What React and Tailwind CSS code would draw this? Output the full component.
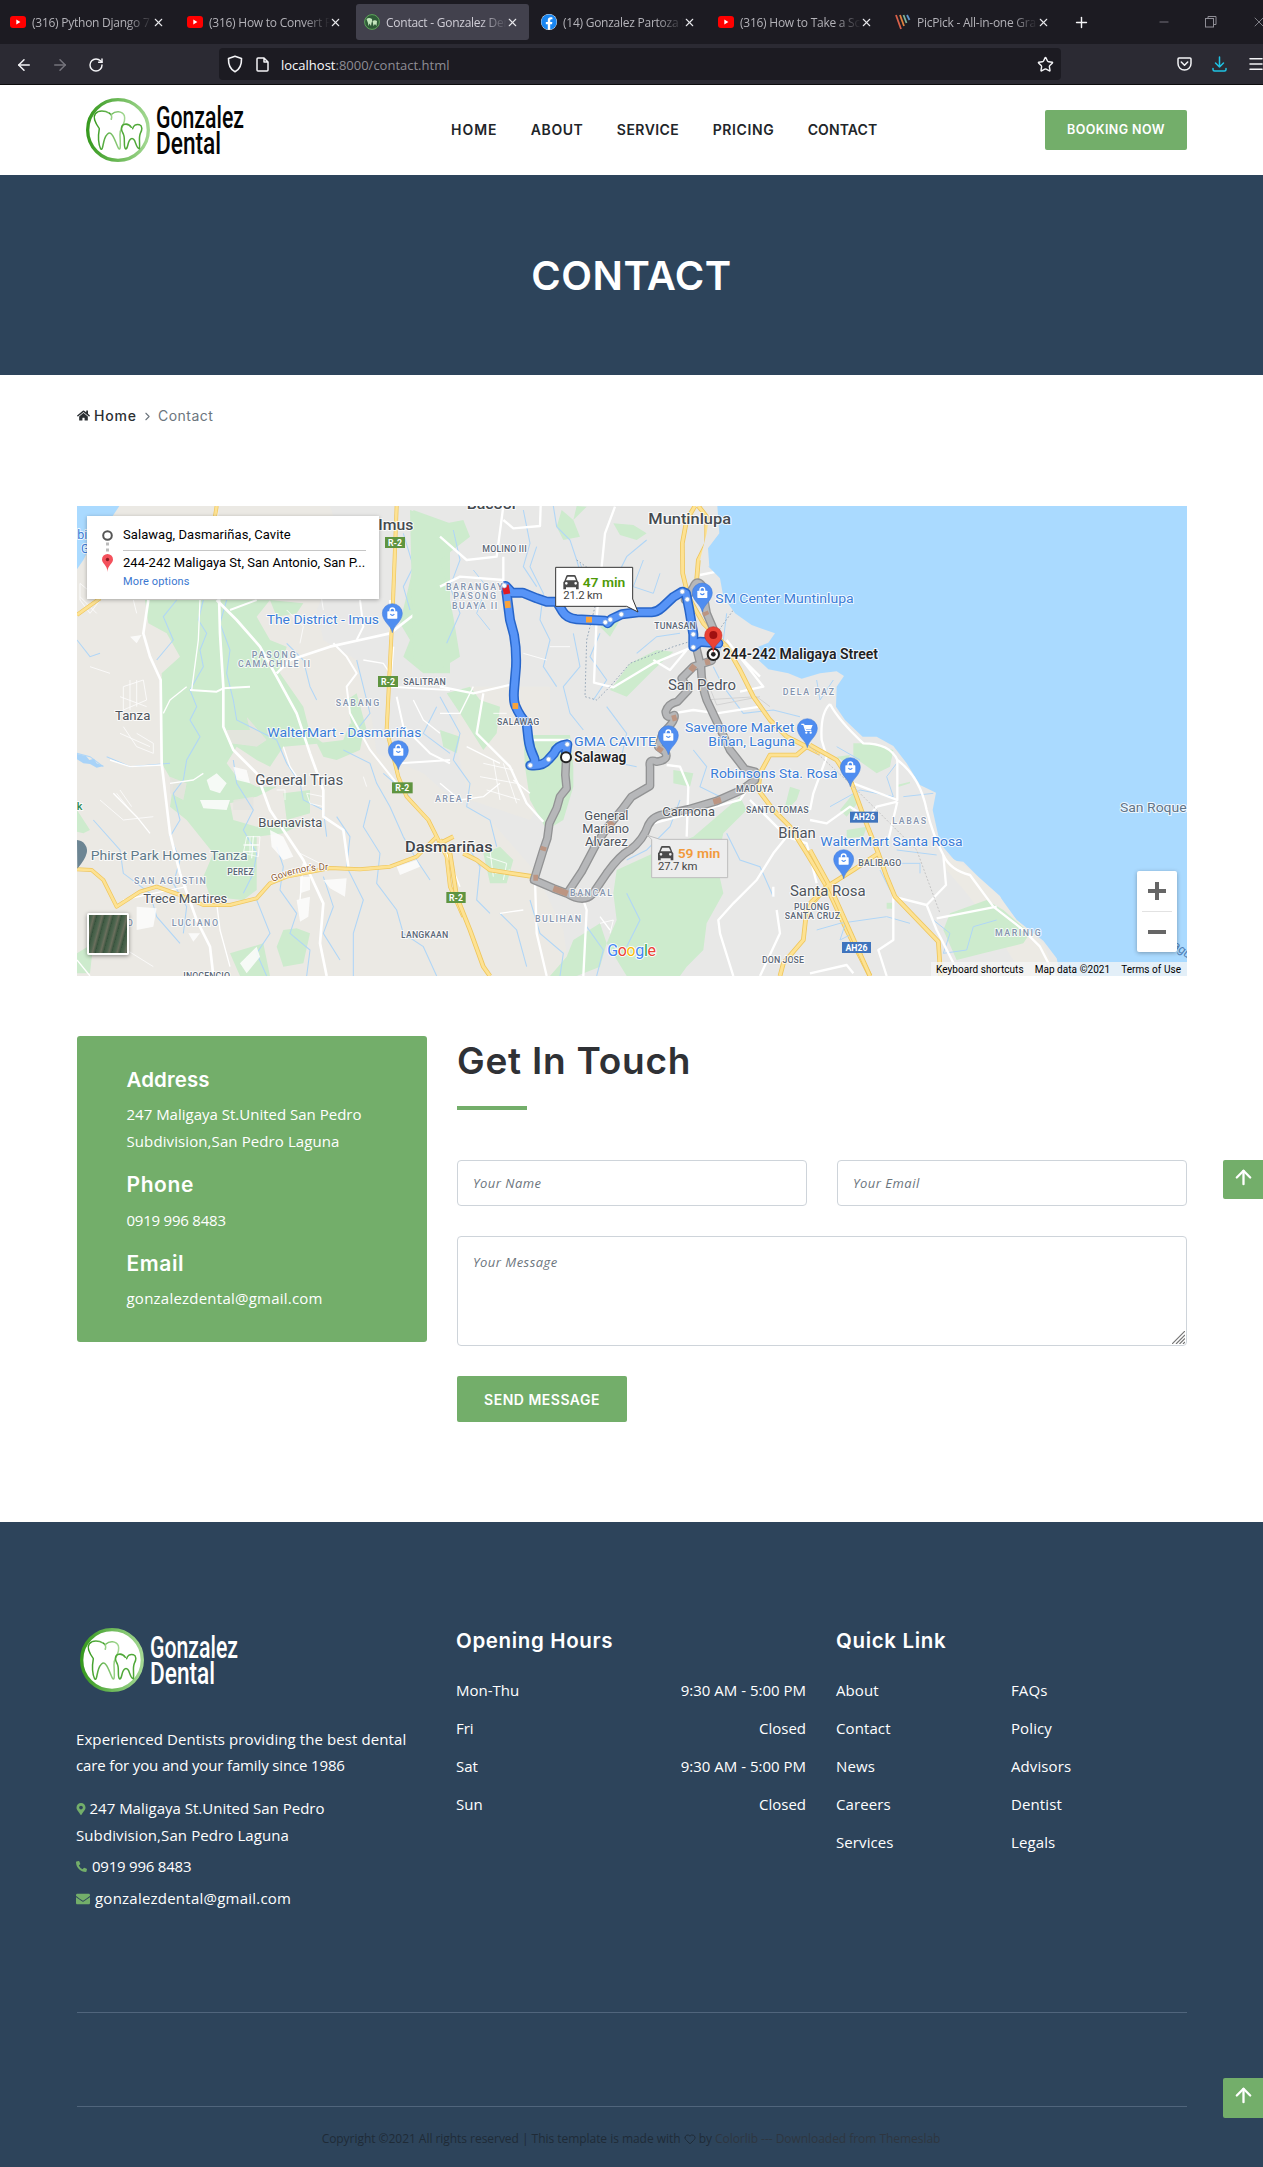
import React from "react";
import { X, Plus, ArrowLeft, ArrowRight, ArrowUp, RotateCw, Star, Heart, Menu, Minus, ChevronRight } from "lucide-react";
import { FaHome, FaMapMarkerAlt, FaPhoneAlt, FaEnvelope, FaFacebook } from "react-icons/fa";

const HEAD = "font-['Inter',sans-serif]";

/* ---------- Logo ---------- */
function Teeth({ size, id, fill }) {
  return (
    <svg width={size} height={size} viewBox="0 0 192 192" fill="none">
      <defs>
        <linearGradient id={id} x1="0" y1="0" x2="1" y2="0">
          <stop offset="0" stopColor="#379a1f" />
          <stop offset="1" stopColor="#a3d892" />
        </linearGradient>
      </defs>
      <circle cx="96" cy="96" r="91" fill={fill} stroke={`url(#${id})`} strokeWidth="10" />
      <g stroke={`url(#${id})`} strokeWidth="4.5" strokeLinecap="round" strokeLinejoin="round">
        <path d="M71 46C56 37 38 36 28 47C20 57 29 76 40 92C36 115 38 140 44 153C51 158 50 138 56 122C61 109 68 103 74 106C84 112 90 138 98 152C105 157 103 138 102 110C102 100 104 94 108 88C113 78 119 67 115 53C108 38 88 38 77 49" />
        <path d="M71 46Q80 52 76 64" />
        <path d="M136 88C130 79 120 77 112 80C105 85 105 96 112 108C119 122 111 147 119 153C126 152 124 138 130 128C134 119 142 119 146 128C150 138 154 153 160 152C163 138 157 120 163 106C169 96 170 84 160 80C150 77 142 83 140 92" stroke="#4fa838" />
      </g>
    </svg>
  );
}

function Logo({ id, color, circle }) {
  return (
    <div className="flex items-center gap-[5px]">
      <Teeth size={64} id={id} fill={circle} />
      <svg width="92" height="64" viewBox="0 0 92 64" fill={color} fontFamily="Roboto, sans-serif" fontWeight="500" fontSize="31.5">
        <text x="1" y="30" textLength="88" lengthAdjust="spacingAndGlyphs">Gonzalez</text>
        <text x="1" y="56" textLength="65" lengthAdjust="spacingAndGlyphs">Dental</text>
      </svg>
    </div>
  );
}

/* ---------- Browser chrome ---------- */
const YouTube = () => (
  <svg width="16" height="16" viewBox="0 0 16 16"><rect y="2" width="16" height="12" rx="3" fill="#f00" /><path d="M6.3 5.6L10.4 8L6.3 10.4Z" fill="#fff" /></svg>
);
const ToothIcon = () => (
  <svg width="16" height="16" viewBox="0 0 16 16"><circle cx="8" cy="8" r="7.4" fill="#2f5b38" stroke="#5da55a" /><path d="M2.5 5Q5 3 8 5Q8.500 7 7.500 9L7 12L5.500 9.500L4.500 12L4 9ZM8.500 7Q11 5.500 13 7L12.500 12L11 10L9.500 12Z" fill="#c4e6bd" /></svg>
);
const PicPick = () => (
  <svg width="16" height="16" viewBox="0 0 16 16" strokeWidth="1.8" fill="none"><path d="M1 1L6 15" stroke="#d8604a" /><path d="M5 1L9 12" stroke="#e0813f" /><path d="M8.500 1L11.500 9" stroke="#7db39a" /><path d="M12 1L14.500 6" stroke="#5d93c8" /></svg>
);
const TABS = [
  { icon: <YouTube />, title: "(316) Python Django 7" },
  { icon: <YouTube />, title: "(316) How to Convert P" },
  { icon: <ToothIcon />, title: "Contact - Gonzalez Den", active: true },
  { icon: <FaFacebook size={16} color="#1a86f0" className="rounded-full bg-white" />, title: "(14) Gonzalez Partoza D" },
  { icon: <YouTube />, title: "(316) How to Take a Scr" },
  { icon: <PicPick />, title: "PicPick - All-in-one Gra" },
];

function Browser() {
  return (
    <div className="font-['Open_Sans',sans-serif]">
      <div className="flex h-11 items-center overflow-hidden bg-[#1c1b22] pl-[2px]">
        <div className="flex gap-1">
          {TABS.map((t, i) => (
            <div key={i} className={`flex h-9 w-[173px] items-center rounded-[3px] pr-3 pl-2 ${t.active ? "bg-[#42414d]" : ""}`}>
              <span className="shrink-0">{t.icon}</span>
              <span className={`ml-[6px] w-[121px] shrink-0 overflow-hidden pt-px text-[12px] tracking-[-0.25px] whitespace-nowrap [mask-image:linear-gradient(to_right,#000_78%,transparent)] ${t.active ? "text-[#cfcdd6]" : "text-[#b3b2b8]"}`}>{t.title}</span>
              <X size={13} strokeWidth={2} color="#e8e8ec" className="-ml-px shrink-0" />
            </div>
          ))}
        </div>
        <Plus size={17} strokeWidth={2} color="#f5f5f8" className="ml-[13px] shrink-0" />
        <div className="ml-[67px] flex shrink-0 items-center gap-[34px] text-[#8f8e96]">
          <Minus size={14} strokeWidth={1.3} />
          <svg width="12" height="12" viewBox="0 0 12 12" fill="none" stroke="currentColor"><rect x=".5" y="2.500" width="8" height="8.500" /><path d="M3 2.500V.5H11V8.500H8.500" /></svg>
          <X size={16} strokeWidth={1.3} />
        </div>
      </div>
      <div className="flex h-[41px] items-center overflow-hidden border-b border-[#0c0c0d] bg-[#2b2a33] pl-[15px]">
        <ArrowLeft size={18} strokeWidth={2} color="#f5f5f8" className="mt-px shrink-0" />
        <ArrowRight size={18} strokeWidth={2} color="#75747c" className="mt-px ml-[18px] shrink-0" />
        <RotateCw size={16} strokeWidth={2.2} color="#f5f5f8" className="mt-px ml-[19px] shrink-0" />
        <div className="ml-[115px] flex h-8 w-[842px] shrink-0 items-center rounded bg-[#1c1b22] pr-[7px] pl-[8px]">
          <svg width="16" height="18" viewBox="0 0 16 18" fill="none" stroke="#f3f3f6" strokeWidth="1.6" strokeLinejoin="round"><path d="M8 1.200L14.500 3.500C14.700 9 13.500 14 8 16.800C2.500 14 1.300 9 1.500 3.500Z" /></svg>
          <svg width="13" height="15" viewBox="0 0 13 15" fill="none" stroke="#f3f3f6" strokeWidth="1.5" strokeLinejoin="round" className="ml-[13px]"><path d="M2 1H8L12 5V13Q12 14 11 14H2Q1 14 1 13V2Q1 1 2 1ZM8 1V5H12" /></svg>
          <span className="ml-[12px] pt-[2px] text-[13px] leading-5 text-[#8e8d95]"><span className="text-[#fbfbfe]">localhost</span>:8000/contact.html</span>
          <Star size={17} strokeWidth={2} color="#f3f3f6" className="ml-auto" />
        </div>
        <svg width="15" height="14" viewBox="0 0 15 14" fill="none" stroke="#f3f3f6" strokeWidth="1.5" strokeLinecap="round" strokeLinejoin="round" className="ml-[116px] shrink-0"><path d="M2 1H13Q14 1 14 2V6.500C14 10.500 11 13 7.500 13S1 10.500 1 6.500V2Q1 1 2 1ZM4.300 5L7.500 8.200L10.700 5" /></svg>
        <svg width="15" height="16" viewBox="0 0 15 16" fill="none" stroke="#1fc3e4" strokeWidth="1.500" strokeLinecap="round" strokeLinejoin="round" className="ml-[20px] shrink-0"><path d="M7.500 1V11M3.500 7L7.500 11L11.500 7M1 12.500V13.500Q1 15 2.500 15H12.500Q14 15 14 13.500V12.500" /></svg>
        <Menu size={18} strokeWidth={2} color="#f3f3f6" className="ml-[20px] shrink-0" />
      </div>
    </div>
  );
}

/* ---------- Header ---------- */
const NAV = [
  ["HOME", "tracking-[0.97px]"],
  ["ABOUT", "tracking-[0.57px]"],
  ["SERVICE", "tracking-[0.45px]"],
  ["PRICING", "tracking-[0.61px]"],
  ["CONTACT", "tracking-[0.1px]"],
];
function Header() {
  return (
    <header className="flex h-[90px] items-center bg-white px-[76px]">
      <div className="ml-[10px]"><Logo id="ringA" color="#060606" circle="#fff" /></div>
      <nav className={`ml-[204px] flex gap-[33.400px] text-[14px] font-semibold text-[#212529] ${HEAD}`}>
        {NAV.map(([n, c]) => <a key={n} className={`-mt-px ${c}`}>{n}</a>)}
      </nav>
      <a className={`ml-auto flex h-10 w-[142px] items-center justify-center rounded-[2px] bg-[#73ae6a] pt-px text-[12.500px] font-semibold tracking-[0.4px] text-white ${HEAD}`}>BOOKING NOW</a>
    </header>
  );
}

/* ---------- Map ---------- */
const BLUE = "#3b7dd8", SUB = "#8494ae", TOWN = "#4e545c", AREA = "#5c6878";
const LABELS = [
  // panel, x, baseline, width, text, size, colour, weight
  ["A", 925, 90, 105, "Imus", 42, "#444a50", 500],
  ["A", 590, 372, 337, "The District - Imus", 39, BLUE, 400],
  ["A", 545, 474, 132, "PASONG", 26, SUB, 500],
  ["A", 504, 502, 216, "CAMACHILE II", 26, SUB, 500],
  ["A", 1000, 556, 127, "SALITRAN", 26, AREA, 500],
  ["A", 797, 618, 131, "SABANG", 26, SUB, 500],
  ["A", 135, 660, 106, "Tanza", 38, TOWN, 400],
  ["A", 592, 711, 462, "WalterMart - Dasmariñas", 39, BLUE, 400],
  ["A", 556, 855, 264, "General Trias", 40, TOWN, 400],
  ["A", 565, 981, 192, "Buenavista", 36, TOWN, 400],
  ["A", 1005, 1057, 263, "Dasmariñas", 44, "#3f444a", 500],
  ["A", 62, 1080, 471, "Phirst Park Homes Tanza", 38, "#617a8a", 400],
  ["A", 472, 1125, 79, "PEREZ", 26, AREA, 500],
  ["A", 192, 1152, 215, "SAN AGUSTIN", 26, SUB, 500],
  ["A", 220, 1208, 252, "Trece Martires", 36, TOWN, 400],
  ["A", 305, 1278, 139, "LUCIANO", 26, SUB, 500],
  ["A", 170, 1278, 18, "O", 26, SUB, 500],
  ["A", 993, 1314, 142, "LANGKAAN", 26, AREA, 500],
  ["A", 340, 1437, 140, "INOCENCIO", 26, AREA, 500],
  ["A", 20, 930, 17, "k", 34, "#2e8b57", 500],
  ["A", 22, 116, 30, "bi", 39, BLUE, 400],
  ["A", 33, 158, 24, "G", 39, BLUE, 400],
  ["B", 80, 28, 152, "Bacoor", 42, "#444a50", 500],
  ["B", 625, 73, 248, "Muntinlupa", 42, "#444a50", 500],
  ["B", 127, 156, 133, "MOLINO III", 26, AREA, 500],
  ["B", 18, 270, 170, "BARANGAY", 26, SUB, 500],
  ["B", 40, 297, 128, "PASONG", 26, SUB, 500],
  ["B", 36, 327, 136, "BUAYA II", 26, SUB, 500],
  ["B", 643, 387, 124, "TUNASAN", 26, AREA, 500],
  ["B", 826, 308, 415, "SM Center Muntinlupa", 39, BLUE, 400],
  ["B", 848, 477, 466, "244-242 Maligaya Street", 40, "#202124", 600],
  ["B", 684, 570, 204, "San Pedro", 40, TOWN, 400],
  ["B", 1028, 585, 154, "DELA PAZ", 26, SUB, 500],
  ["B", 171, 675, 127, "SALAWAG", 26, AREA, 500],
  ["B", 735, 695, 328, "Savemore Market", 39, BLUE, 400],
  ["B", 805, 738, 260, "Biñan, Laguna", 39, BLUE, 400],
  ["B", 402, 737, 246, "GMA CAVITE", 39, BLUE, 400],
  ["B", 403, 786, 156, "Salawag", 40, "#202124", 600],
  ["B", 811, 834, 382, "Robinsons Sta. Rosa", 39, BLUE, 400],
  ["B", 888, 877, 111, "MADUYA", 26, AREA, 500],
  ["B", 667, 949, 158, "Carmona", 37, TOWN, 400],
  ["B", 918, 939, 188, "SANTO TOMAS", 26, AREA, 500],
  ["B", 433, 961, 132, "General", 37, TOWN, 400],
  ["B", 427, 1000, 140, "Mariano", 37, TOWN, 400],
  ["B", 435, 1038, 128, "Alvarez", 37, TOWN, 400],
  ["B", 1015, 1014, 112, "Biñan", 40, TOWN, 400],
  ["B", -15, 906, 110, "AREA F", 26, SUB, 500],
  ["B", 390, 1188, 126, "BANCAL", 26, SUB, 500],
  ["B", 285, 1266, 138, "BULIHAN", 26, SUB, 500],
  ["B", 1050, 1188, 227, "Santa Rosa", 40, TOWN, 400],
  ["B", 1062, 1230, 106, "PULONG", 26, AREA, 500],
  ["B", 1034, 1257, 166, "SANTA CRUZ", 26, AREA, 500],
  ["B", 966, 1389, 126, "DON JOSE", 26, AREA, 500],
  ["C", 247, 972, 101, "LABAS", 26, SUB, 500],
  ["C", 31, 1038, 427, "WalterMart Santa Rosa", 39, BLUE, 400],
  ["C", 145, 1098, 129, "BALIBAGO", 26, AREA, 500],
  ["C", 555, 1308, 137, "MARINIG", 26, SUB, 500],
  ["C", 930, 936, 200, "San Roque", 38, "#5f7488", 400],
];
const TR = {
  A: "translate(-7 -6) scale(.33333)",
  B: "translate(363 -6) scale(.33333)",
  C: "translate(733 -6) scale(.33333)",
};
const Labels = ({ g }) =>
  LABELS.filter((l) => l[0] === g).map(([, x, y, w, t, s, c, wt]) => (
    <text key={t + y} x={x} y={y} textLength={w} lengthAdjust={s > 30 ? "spacingAndGlyphs" : "spacing"} fontSize={s > 30 ? s + 1.5 : s + 0.5} fill={c} fontWeight={wt} stroke="#fff" strokeOpacity=".8" strokeWidth="6" strokeLinejoin="round" paintOrder="stroke">{t}</text>
  ));
const Badge = ({ x, y, w, t, c }) => (
  <g>
    <rect x={x} y={y} width={w} height="33" fill={c} />
    <text x={x + w / 2} y={y + 26} textAnchor="middle" fontSize="26" fontWeight="700" fill="#fff">{t}</text>
  </g>
);
const Pin = ({ x, y, cart }) => (
  <g transform={`translate(${x} ${y})`}>
    <path d="M0 86C-4 64-30 52-30 28A30 29 0 0 1 30 28C30 52 4 64 0 86Z" fill="#4f8df0" stroke="#3d78d8" strokeWidth="1.500" />
    {cart ? (
      <g fill="#fff"><path d="M-18 16H-11L-5 34H12" fill="none" stroke="#fff" strokeWidth="4" /><path d="M-10 18H16L11 31H-5Z" /><circle cx="-3" cy="41" r="3.500" /><circle cx="10" cy="41" r="3.500" /></g>
    ) : (
      <g><path d="M-7 23V19A7 7 0 0 1 7 19V23" fill="none" stroke="#fff" strokeWidth="4" /><rect x="-15" y="22" width="30" height="22" rx="2" fill="#fff" /><path d="M-6 30Q0 38 6 30" fill="none" stroke="#4f8df0" strokeWidth="3.500" /></g>
    )}
  </g>
);
const BLUE_ROUTE = "M378 760L382 733Q352 736 342 760L326 778Q308 800 271 796Q288 792 283 775Q268 745 265 715L260 670Q240 650 226 617Q219 600 223 560L228 500Q230 450 222 405L210 360L197 258L216 278H248L290 295L320 305H350L368 335Q380 355 410 358L495 362L503 370L515 357L545 343L595 337H635Q652 336 668 321L700 291L727 275L738 280L748 330L760 403V440L780 425L835 430";
const GREY_A = "M378 785L376 825L380 865L360 890L350 925L328 970L322 1015L310 1050L282 1140L340 1165L380 1180Q430 1210 458 1182L500 1120Q540 1065 570 1050Q610 1020 625 975Q640 945 680 942L745 928L830 903L905 870L945 840V815L915 808Q890 775 870 750L840 685L800 600Q785 560 783 500L768 440";
const GREY_B = "M385 1175L425 1115L470 1030L500 985L545 930L575 890L630 858V800Q625 775 650 785Q690 780 675 755L655 740L668 700Q710 660 703 645Q680 660 677 635Q685 610 712 605L745 570L725 535L760 500L815 482";
const GREY_C = "M735 300L760 262Q770 238 785 255L800 340L828 405";

function MapCanvas() {
  const green = "#cdebcd";
  const river = "#b0d6f7";
  return (
    <svg width="1110" height="470" viewBox="0 0 1110 470" fontFamily="Roboto, sans-serif" className="block">
      <rect width="1110" height="470" fill="#e8e8e7" />
      <g transform={TR.A}>
        <path d="M21 18H780L820 140L740 330L760 420L860 480L900 620L920 760L1060 820L1150 900L1260 960L1400 1120L1480 1290L1500 1428H21Z" fill="#ebe9e4" />
        <path d="M1190 560H1440V860L1380 960L1200 900L1150 700Z" fill="#ebe9e4" />
        <path d="M21 18H148L120 60L70 120L40 180L21 208Z" fill="#aadaff" />
        <g fill={green}>
          <path d="M225 300H600L560 350L600 420L650 440L630 520L700 620L720 700L760 730L640 740L600 800L560 780L500 740L470 790L500 830L560 860L620 860L560 890L480 910L490 960L560 980L720 960L640 1000L560 1010L560 1170L520 1200L420 1190L400 1130L430 1060L350 960L300 920L310 850L275 790L275 520L330 470L290 400L235 370Z" />
          <path d="M1030 30L1140 70V520L1060 520L1000 470L1020 420L990 370L1030 200Z" />
          <path d="M600 300L700 310L680 340L620 350ZM740 730L820 720L840 670L880 700L870 750L800 780L760 770ZM640 880L720 870L720 940L650 960ZM21 930L60 990L40 1000L21 995ZM21 1360L70 1330L60 1420H21ZM480 1360L580 1330L600 1428H510ZM640 1290L680 1285L720 1300L700 1390L640 1400L620 1340ZM830 600L860 580L890 690L850 700Z" />
        </g>
        <g fill="#e6e4df" opacity=".9"><path d="M470 690L540 690L530 650L590 720L560 740L480 730ZM300 830L350 850L340 900L300 880ZM490 900L550 890L550 930L490 930Z" /></g>
        <g fill="none" stroke={river} strokeWidth="3.200">
          <path d="M400 300L385 360L410 400L390 450L400 500L360 570L380 620L360 660L390 710L350 780L340 840L310 880L330 960L300 1010L330 1080L310 1150L350 1220L340 1300" />
          <path d="M470 300L450 370L480 450L470 520L490 600L500 660L560 690L620 720L650 790L690 850L700 900L760 930L770 1010" />
          <path d="M320 300L280 350L310 420L260 480M650 430L700 480L720 560L740 600M860 480L880 560L900 640L860 690" />
          <path d="M490 780L500 850L550 930L520 990L560 1060L550 1120L520 1180M560 1200L600 1300L560 1360L590 1428" />
          <path d="M620 1040L640 1100L630 1170L680 1240L660 1300L720 1350L710 1428M800 950L840 1010L830 1100L880 1200L850 1300L850 1428" />
          <path d="M820 750L900 790L920 850L960 920L1000 1010L1040 1080L1080 1140M900 900L880 980L930 1060L920 1150L980 1230L1000 1300L1060 1340L1100 1428" />
          <path d="M21 760L60 770L100 800M21 420L60 470L90 460M70 960L150 1050L160 1120L240 1180L260 1250L330 1330M1000 100L1030 200L1000 260L1020 330" />
          <path d="M110 770L180 800L300 790M940 820L1010 880L1060 950M1100 620L1060 700L1140 760M760 1130L790 1220L760 1300L810 1380" />
        </g>
        <path d="M21 762L48 768L58 780L72 776L80 790L102 798L80 803L60 792L40 790L21 778Z" fill="#a8d3f8" />
        <g fill="none" stroke="#fff" strokeWidth="8" strokeLinejoin="round">
          <path d="M235 300L220 400L240 470L272 540L275 790L300 1000L330 1120L380 1260L420 1340L430 1428" />
          <path d="M440 20L450 400L460 560V680L490 750L560 820L600 930L700 1080L760 1210L750 1330L770 1428" />
          <path d="M440 300L500 360L570 440L620 530L680 640L720 760L760 870V950L820 990L835 1100" />
          <path d="M620 520L660 480L780 440L870 420L960 400L1050 330L1140 260" />
          <path d="M360 570L440 575L460 565L540 560M790 430L830 470L860 520L830 560L840 640L900 750L980 850" strokeWidth="6" />
          <path d="M870 300L880 380L860 420M970 440L960 560L1140 570M980 590L1000 680L1080 760L1140 790M990 790L1140 780M960 300V420M480 330L560 300" strokeWidth="6" />
          <path d="M390 300L385 420L365 570M280 640L300 600L350 560M275 795L180 800L120 780M300 850L370 840L400 820" strokeWidth="4" />
          <path d="M21 1380L60 1428M130 880L200 950L240 1000M160 1200L250 1180L350 1160M440 1210L450 1290L480 1400M700 1090L690 1200M1030 600L1060 660L1110 700M880 480L940 490L960 520M640 740L660 800L700 860" strokeWidth="4" />
        </g>
        <g fill="#fdfdfd" opacity=".85">
          <path d="M410 840L440 820L470 850L450 880L420 870ZM390 900L480 900L470 930L400 925ZM490 800L530 810L540 850L500 840ZM600 990L640 1010L670 1070L640 1080L605 1040ZM690 1130L720 1130V1170L690 1180ZM760 1140L830 1135L825 1190L780 1165ZM680 1200L720 1190L715 1250L690 1265ZM200 1220L260 1225L250 1280L200 1290ZM355 1300L390 1300L370 1325ZM180 410L215 405L200 430ZM980 1100L1040 1080L1050 1100L990 1125ZM510 1390L560 1340L570 1370L530 1420Z" />
        </g>
        <g fill="none" stroke="#fff" strokeWidth="2.500" opacity=".9">
          <path d="M150 590L230 620M160 560L220 540L230 600L160 630ZM180 540V630M200 540V620M150 700L240 740M160 680L200 740L250 760V730L200 700M30 250L90 300L60 340L30 300ZM30 290L80 340M710 880L760 890V920L720 910ZM530 1010L570 1010L565 1070L520 1060ZM540 1010V1060M525 1035H565M140 880L180 930M150 870L185 920M620 870H645V900" />
          <path d="M690 1060L750 1090M880 830L890 860M740 200L760 330M650 330L700 380L690 430M60 500L120 520M190 300L200 340M90 900L160 960L250 950M170 1350L250 1400" />
        </g>
        <path d="M520 1035H568M520 1055H560M550 1008L545 1075" stroke="#fff" strokeWidth="3" />
        <g fill="none" stroke="#efc65c" strokeWidth="12" strokeLinejoin="round"><path d="M980 18L968 330L950 690L985 830L1010 890L1075 960L1100 1010L1040 1070L960 1100L870 1108L780 1104L650 1130L600 1150L560 1195L480 1215L400 1215L330 1185L260 1160L210 1175L140 1220L100 1140L65 1110L21 1108M21 345L90 295M1100 1010L1130 1070L1140 1160L1180 1250M440 18L435 50" /></g>
        <g fill="none" stroke="#fde293" strokeWidth="8" strokeLinejoin="round"><path d="M980 18L968 330L950 690L985 830L1010 890L1075 960L1100 1010L1040 1070L960 1100L870 1108L780 1104L650 1130L600 1150L560 1195L480 1215L400 1215L330 1185L260 1160L210 1175L140 1220L100 1140L65 1110L21 1108M21 345L90 295M1100 1010L1130 1070L1140 1160L1180 1250M440 18L435 50" /></g>
      </g>
      <g transform={TR.B}>
        <g fill={green}>
          <path d="M-90 30L20 70L70 60L90 110L0 180L20 250L40 350L60 470L-20 520L-80 480ZM20 580L90 560L120 600L180 620L170 700L130 750L60 640ZM250 705H390L400 800L400 860L370 960L320 990L270 900L255 800Z" />
          <path d="M520 70L580 75L620 100L590 120L540 105ZM365 30L400 60L420 110L370 120L350 80ZM510 570L570 490L650 450L700 455L640 510L560 590ZM480 380L540 360L510 410ZM400 60L440 20L410 18ZM300 760L290 850L330 850Z" />
          <path d="M530 1110L640 1060L760 1010L900 890L920 930L850 1000L830 1090L850 1180L800 1270L790 1350L740 1400L720 1428H560L500 1330L530 1260L520 1180ZM700 810L760 820L750 860L700 850ZM130 1060L180 1040L220 1080L200 1150L150 1150ZM1050 860L1080 870L1070 900L1030 940Z" />
          <path d="M400 1320L480 1270L500 1330L480 1400L410 1428H330L380 1370ZM0 690L60 710L50 760L10 740Z" />
        </g>
        <g fill="none" stroke={river} strokeWidth="3.200">
          <path d="M40 90L60 180L30 260L60 340L20 430M250 30L270 130L250 200L290 260M340 18L350 80L390 120L410 180L430 250L410 310M290 140L270 200L310 280L300 360L330 420L310 500L350 560" />
          <path d="M620 120L560 170L520 250L560 300M480 400L450 470L500 540L460 600M590 460L650 410L720 400M860 340L850 420L830 480M400 400L420 500L370 560L390 640L430 690" />
          <path d="M0 590L60 700L40 780L90 850L80 920L150 960L170 1040M90 1050L120 1100L110 1200L150 1240M180 1240L230 1290L260 1400M270 1200L300 1300L370 1360L360 1428M440 1280L490 1350L470 1428" />
          <path d="M500 620L560 700L540 790L590 800M720 900L690 980L620 1050L560 1080M760 750L800 800L780 860L860 900M860 1000L900 1080L960 1100L1000 1190M820 500L850 560L910 640L1000 630L1080 650M560 1180L600 1260L560 1340" />
          <path d="M100 210L140 260L110 340L150 390M420 190L450 260L560 230M610 180L580 260L640 280L660 220" strokeWidth="3" />
        </g>
        <g fill="none" stroke="#fff" strokeWidth="7" strokeLinejoin="round">
          <path d="M0 110L80 180L170 170L190 18M190 60L220 85L300 78L302 18M190 170V260M0 260L60 230L190 240" />
          <path d="M525 20L495 100L470 350L462 548L520 562L640 490L760 440M640 480L690 510L740 450M830 70V215L780 225" />
          <path d="M0 560L100 580L230 550M130 580L110 700L210 800L260 910L310 965M430 1200L440 1230L430 1428M285 1140L290 1300L320 1428M270 720H390" />
          <path d="M860 420L970 560L900 575M900 470L960 530M700 640L760 630L830 640L960 620M680 795L720 800L745 860L740 1010" />
          <path d="M930 900L1040 1010L1100 1030L1130 1150M1040 1010L1000 1060L950 1140L880 1210L835 1260L840 1300L880 1428M640 970L900 900L920 870M960 1428L1020 1300L1010 1230M1000 1190V1160" />
          <path d="M100 560L60 640L0 640M0 850L60 900L130 890L180 850M220 840L270 880M80 740L180 790M20 1060L60 1160M180 1240L250 1230M480 1250L510 1290" strokeWidth="4" />
        </g>
        <g fill="none" stroke="#fff" strokeWidth="2.500"><path d="M130 790L220 810M120 830L230 850M140 870L240 900M160 780L180 900M190 790L230 910M140 1070L200 1090L190 1140M150 1050L160 1130M165 1120L210 1110M480 1270L520 1260L510 1300M330 440H390M250 460L320 480M160 640L200 640" /></g>
        <path d="M410 180L480 230L470 300L440 420L435 590L470 600L510 560L570 490L700 440L830 400L880 330" fill="none" stroke="#97a7b8" strokeWidth="3" strokeDasharray="5 6" />
        <path d="M770 500L790 600L950 590L990 620M800 540L830 615L960 590" fill="none" stroke="#d3d3d3" strokeWidth="3" />
        {["#efc65c", "#fde293"].map((c, i) => (
          <g key={c} fill="none" stroke={c} strokeWidth={i ? 9 : 14} strokeLinejoin="round">
            <path d="M765 18L740 60L727 130L728 220L745 290L790 370L860 440L900 510L940 590L990 660L1040 710L1140 760" />
            <path d="M775 18L800 50V130L775 180L770 240" />
            <path d="M1100 740L1070 765H990L960 820L955 870L1000 930L1050 980L1100 1060L1160 1160L1220 1290L1290 1428" />
            <path d="M0 1020L30 1060L50 1190L90 1290L130 1400L150 1428M0 1030L40 1010M70 1060L110 1080L150 1110L280 1130M1160 1160L1100 1230L1090 1320L1030 1390L1020 1428" />
          </g>
        ))}
      </g>
      <g transform={TR.B}>
        <path d="M830 18L836 100L802 145L806 200L840 235L850 290L885 340L935 375L1005 400L985 428L955 440L945 470L985 508L1045 520L1085 536L1140 520L1190 514L1212 528L1190 560L1188 620L1215 660L1268 710L1310 710L1360 738L1400 790L1440 855L1488 878L1478 930L1500 1030L1545 1082L1570 1085L1615 1130L1680 1188L1690 1210L1730 1260L1810 1322L1850 1375L1862 1428H2260V18Z" fill="#aadaff" />
        <path d="M812 18H832L838 100L804 145L808 200L780 180L800 100Z" fill="#e8e8e7" />
      </g>
      <g transform={TR.C}>
        <path d="M400 1060L470 1100L570 1190L620 1260L700 1330L740 1428H640L560 1300L470 1180L410 1110Z" fill="#eceae4" />
        <path d="M130 730L170 730L250 750L240 800L200 820L130 770ZM90 930L130 880L150 900L110 950ZM420 1240L530 1200L580 1230L660 1300L640 1330L520 1360L440 1380L400 1290ZM110 990L170 980L160 1010L110 1015ZM80 770L120 765L110 790ZM230 1208H246V1226H230ZM260 855L300 845V850L262 862Z" fill={green} />
        <g fill="none" stroke={river} strokeWidth="3"><path d="M20 540L30 600L70 540M80 740L150 780M260 790L230 830L250 890L150 870L60 920M260 1050L380 1065M270 1090H330V1120M370 880L280 890M210 1110L240 1170M110 1260L90 1320L130 1300M370 1260L420 1300L400 1360L470 1350L490 1280L560 1260M20 1290L90 1270L230 1250L300 1270" /></g>
        <g fill="none" stroke="#fff" strokeWidth="7" strokeLinejoin="round">
          <path d="M60 612Q30 640 35 720L50 770L10 880L0 930M60 612Q85 660 160 730Q240 730 262 780Q330 830 350 930Q370 1010 400 1065Q420 1110 480 1125L550 1220L640 1290L690 1340L735 1428" />
          <path d="M262 780V900L130 850M262 905L200 920L170 960M0 960L50 970L120 920L150 940M400 1065L408 1155L350 1215L250 1190L250 1320L205 1350L230 1428M350 1215L380 1290L450 1428M380 1255L560 1220M0 1420L110 1395L130 1420M235 1020L262 905" />
        </g>
        {["#efc65c", "#fde293"].map((c, i) => (
          <g key={c} fill="none" stroke={c} strokeWidth={i ? 9 : 14} strokeLinejoin="round">
            <path d="M0 735L80 780L125 850L165 960L205 1060L230 1130L255 1190L385 1325L392 1428M0 1050L60 1160L180 1428M50 1160L130 1110L205 1060M0 1210L60 1150" />
          </g>
        ))}
        <path d="M0 740L130 860L240 970L320 1050L390 1240" fill="none" stroke="#c4c4c4" strokeWidth="3" strokeDasharray="6 5" />
      </g>
      <g transform={TR.B} fill="none" strokeLinecap="round" strokeLinejoin="round">
        <g stroke="#929394" strokeWidth="26"><path d={GREY_C} /><path d={GREY_B} /><path d={GREY_A} /></g>
        <g stroke="#b6b7b9" strokeWidth="18"><path d={GREY_C} /><path d={GREY_B} /><path d={GREY_A} /></g>
        <g stroke="#bc9582" strokeWidth="18" strokeLinecap="butt"><path d="M340 1165L383 1181M820 906L843 899M752 512L764 496M696 656L710 652M655 755L664 742M308 1052L312 1040M280 1133H294M795 335L800 346M795 488L810 484M500 985L518 965" /></g>
        <path d={BLUE_ROUTE} stroke="#2765c9" strokeWidth="30" />
        <path d={BLUE_ROUTE} stroke="#5794f7" strokeWidth="21" />
        <path d="M196 255L201 282" stroke="#e01b24" strokeWidth="20" strokeLinecap="butt" />
        <path d="M202 303L204 324M226 609V627M438 359H456" stroke="#f9a33a" strokeWidth="17" strokeLinecap="butt" />
        <g fill="#fff" stroke="#9db7dd" strokeWidth="2">
          {[[193, 257], [496, 367], [511, 359], [544, 343], [727, 275], [742, 298], [760, 403], [760, 442], [382, 733], [326, 778], [271, 796]].map(([x, y]) => <circle key={`${x}-${y}`} cx={x} cy={y} r="7" />)}
        </g>
      </g>
      <g transform={TR.A}>
        <path d="M21 1020A32 32 0 0 1 50 1060Q45 1080 22 1106Z" fill="#6c8593" />
        <Labels g="A" />
        <path id="gov" d="M608 1146Q690 1108 784 1110" fill="none" />
        <text fontSize="29" fill="#8d5a34" stroke="#fff" strokeWidth="5" paintOrder="stroke"><textPath href="#gov" textLength="172">Governor's Dr</textPath></text>
        <Badge x={945} y={111} w={60} t="R-2" c="#5f9440" /><Badge x={924} y={528} w={60} t="R-2" c="#5f9440" /><Badge x={966} y={847} w={62} t="R-2" c="#5f9440" />
        <Pin x={967} y={312} /><Pin x={985} y={723} />
      </g>
      <g transform={TR.B}>
        <Pin x={787} y={250} /><Pin x={685} y={678} /><Pin x={1102} y={657} cart />
        <Labels g="B" />
        <Badge x={19} y={1176} w={58} t="R-2" c="#5f9440" />
        <circle cx="378" cy="772" r="15" fill="#fff" stroke="#222" strokeWidth="6" />
        <circle cx="820" cy="463" r="17" fill="#fff" stroke="#222" strokeWidth="6" /><circle cx="820" cy="463" r="7" fill="#222" />
        <path d="M820 455C818 432 794 428 794 406A26 26 0 0 1 846 406C846 428 822 432 820 455Z" fill="#ea4335" stroke="#c5221f" strokeWidth="1.500" /><circle cx="820" cy="405" r="12" fill="#a01010" />
        <path d="M347 202H578V297L594 336L560 319H347Z" fill="#fff" stroke="#333" strokeWidth="3" />
        <text x="428" y="262" textLength="128" lengthAdjust="spacingAndGlyphs" fontSize="41" fontWeight="600" fill="#4e9a06">47 min</text>
        <text x="370" y="297" textLength="117" fontSize="34" fill="#444">21.2 km</text>
        <path d="M635 1018L622 1006L660 1018H863V1133H635Z" fill="#ededed" stroke="#bdbdbd" strokeWidth="3" />
        <text x="713" y="1074" textLength="128" lengthAdjust="spacingAndGlyphs" fontSize="41" fontWeight="600" fill="#f29a3a">59 min</text>
        <text x="654" y="1109" textLength="118" fontSize="34" fill="#444">27.7 km</text>
        <g fill="#4a4a4a">
          {[[370, 225], [654, 1038]].map(([x, y]) => (
            <path key={x} transform={`translate(${x} ${y})`} fillRule="evenodd" d="M3 18L9 2Q10 0 13 0H33Q36 0 37 2L43 18L46 22V43H38V37H8V43H0V22ZM8 16H38L33 5H13ZM9 29A4 4 0 1 0 9 21A4 4 0 1 0 9 29ZM37 29A4 4 0 1 0 37 21A4 4 0 1 0 37 29Z" />
          ))}
        </g>
        <text x="502" y="1367" textLength="146" fontSize="48" fontWeight="400" stroke="#fff" strokeWidth="5" paintOrder="stroke">
          <tspan fill="#4285f4">G</tspan><tspan fill="#ea4335">o</tspan><tspan fill="#fbbc05">o</tspan><tspan fill="#4285f4">g</tspan><tspan fill="#34a853">l</tspan><tspan fill="#ea4335">e</tspan>
        </text>
      </g>
      <g transform={TR.C}>
        <Badge x={120} y={935} w={84} t="AH26" c="#3f74bd" /><Badge x={96} y={1326} w={87} t="AH26" c="#3f74bd" />
        <Pin x={121} y={774} /><Pin x={101} y={1050} />
        <Labels g="C" />
        <text transform="translate(1086 1340) rotate(38)" fontSize="36" fill="#4f7fb5">agu</text>
      </g>
    </svg>
  );
}

function MapPanel() {
  return (
    <section className="relative h-[470px] w-full overflow-hidden font-['Roboto',sans-serif]">
      <MapCanvas />
      <div className="absolute top-[10px] left-[10px] flex h-[83px] w-[292px] bg-white pt-[9px] pl-[15px] shadow-[0_1px_4px_rgba(0,0,0,0.3)]">
        <svg width="12" height="48" viewBox="0 0 12 48" className="shrink-0"><circle cx="5.500" cy="10.500" r="4.300" fill="none" stroke="#555" strokeWidth="2" /><rect x="4" y="17.500" width="3" height="3" fill="#bbb" /><rect x="4" y="23.500" width="3" height="3" fill="#bbb" /><path d="M5.500 47C5.500 40 0 39 0 34.500A5.500 5.500 0 0 1 11 34.500C11 39 5.500 40 5.500 47Z" fill="#f4515c" /><circle cx="5.500" cy="34.500" r="1.700" fill="#8a1c22" /></svg>
        <div className="ml-[9px] w-[243px] text-[13px] leading-[18px] whitespace-nowrap text-black">
          <p className="h-[26px] border-b border-[#c6c6c6] pt-px tracking-[0.06px]">Salawag, Dasmariñas, Cavite</p>
          <p className="mt-[3px] tracking-[0.02px]">244-242 Maligaya St, San Antonio, San P...</p>
          <p className="mt-px text-[11px] leading-[18px] tracking-[0.15px] text-[#3a77d0]">More options</p>
        </div>
      </div>
      <div className="absolute bottom-[21px] left-[10px] h-[42px] w-[42px] rounded-[2px] border-2 border-white bg-[repeating-linear-gradient(105deg,#3f5a42_0px,#4f6650_3px,#6b6f5d_5px,#34503a_8px)] shadow-[0_1px_4px_rgba(0,0,0,0.4)]" />
      <div className="absolute right-[10px] bottom-[24px] flex h-[81px] w-10 flex-col items-center rounded-[2px] bg-white shadow-[0_1px_4px_rgba(0,0,0,0.3)]">
        <svg width="18" height="40" viewBox="0 0 18 40" className="text-[#666]"><path d="M9 11V29M0 20H18" stroke="currentColor" strokeWidth="4" /></svg>
        <div className="h-px w-[30px] bg-[#e2e2e2]" />
        <svg width="18" height="40" viewBox="0 0 18 40" className="text-[#666]"><path d="M0 20H18" stroke="currentColor" strokeWidth="4" /></svg>
      </div>
      <div className="absolute right-0 bottom-0 flex h-[14px] w-[256px] items-center justify-between bg-[#f5f5f5]/75 pr-[6px] pl-[5px] text-[10px] whitespace-nowrap text-black">
        <span className="tracking-[0.05px]">Keyboard shortcuts</span><span className="tracking-[0.05px]">Map data ©2021</span><span className="tracking-[0.05px]">Terms of Use</span>
      </div>
    </section>
  );
}

/* ---------- Contact ---------- */
const BODY = "font-['Open_Sans',sans-serif]";
const ScrollTop = ({ className }) => (
  <a className={`absolute right-0 flex w-10 items-start justify-center rounded-l-[2px] bg-[#73ae6a] pt-[6px] ${className}`}>
    <ArrowUp size={23} strokeWidth={2.4} color="#fff" />
  </a>
);
const Field = ({ label, className }) => (
  <label className={`block rounded-[4px] border border-[#ced4da] px-[15px] text-[13px] tracking-[0.48px] text-[#6c757d] italic ${BODY} ${className}`}>
    <span>{label}</span>
  </label>
);
function Contact() {
  const h = `leading-6 font-semibold ${HEAD}`;
  return (
    <section className="mt-[60px] grid grid-cols-3 items-start gap-[30px]">
      <div className={`h-[306px] rounded-[3px] bg-[#73ae6a] pt-8 pl-[49.500px] text-[15px] leading-[27px] text-white ${BODY}`}>
        <h3 className={`${h} text-[20.500px] tracking-[0.1px]`}>Address</h3>
        <p className="mt-[9px]">247 Maligaya St.United San Pedro<br /><span className="tracking-[0.1px]">Subdivision,San Pedro Laguna</span></p>
        <h3 className={`mt-[18px] ${h} text-[21px] tracking-[0.6px]`}>Phone</h3>
        <p className="mt-[10px] tracking-[-0.22px]">0919 996 8483</p>
        <h3 className={`mt-[18px] ${h} text-[21px] tracking-[0.6px]`}>Email</h3>
        <p className="mt-[9px] tracking-[0.23px]">gonzalezdental@gmail.com</p>
      </div>
      <div className="col-span-2">
        <h2 className={`mt-[5px] text-[37px] leading-10 font-semibold tracking-[0.75px] text-[#2f3135] ${HEAD}`}>Get In Touch</h2>
        <div className="mt-[25px] h-1 w-[70px] bg-[#73ae6a]" />
        <div className="mt-[50px] grid grid-cols-2 gap-[30px]">
          <Field label="Your Name" className="h-[46px] leading-[44px]" />
          <Field label="Your Email" className="h-[46px] leading-[44px]" />
        </div>
        <div className="relative mt-[30px]">
          <Field label="Your Message" className="h-[110px] pt-[15px] leading-5" />
          <svg width="13" height="13" viewBox="0 0 13 13" className="absolute right-[2px] bottom-[2px]" stroke="#777" strokeWidth="1.200"><path d="M0 13L13 0M4 13L13 4M7.500 13L13 7.500M11 13L13 11" /></svg>
        </div>
        <a className={`mt-[30px] flex h-[46px] w-[170px] items-center justify-center rounded-[2px] bg-[#73ae6a] text-[14px] font-semibold tracking-[0.5px] text-white ${HEAD}`}>SEND MESSAGE</a>
      </div>
    </section>
  );
}

/* ---------- Footer ---------- */
const HOURS = [["Mon-Thu", "9:30 AM - 5:00 PM"], ["Fri", "Closed"], ["Sat", "9:30 AM - 5:00 PM"], ["Sun", "Closed"]];
const LINKS = [["About", "FAQs"], ["Contact", "Policy"], ["News", "Advisors"], ["Careers", "Dentist"], ["Services", "Legals"]];
function Footer() {
  const h = `mt-px text-[20.500px] leading-6 font-semibold tracking-[0.65px] ${HEAD}`;
  return (
    <footer className={`relative h-[645px] bg-[#2d445b] px-[76px] pt-[106px] text-[15px] text-white ${BODY}`}>
      <div className="grid h-[384px] w-[1110px] grid-cols-3 gap-[30px]">
        <div>
          <div className="ml-[4px]"><Logo id="ringB" color="#fff" circle="#fff" /></div>
          <p className="mt-[34px] leading-[26px] whitespace-nowrap"><span className="tracking-[0.09px]">Experienced Dentists providing the best dental</span><br /><span className="tracking-[-0.14px]">care for you and your family since 1986</span></p>
          <p className="mt-[17px] leading-[27px]"><FaMapMarkerAlt size={12} color="#73ae6a" className="mr-[3px] -ml-[1.500px] inline align-[-1px]" />247 Maligaya St.United San Pedro<br /><span className="tracking-[0.1px]">Subdivision,San Pedro Laguna</span></p>
          <p className="mt-1 flex items-center leading-[27px] tracking-[-0.22px]"><FaPhoneAlt size={11} color="#73ae6a" className="mr-[5px]" />0919 996 8483</p>
          <p className="mt-[5px] flex items-center leading-[27px] tracking-[0.23px]"><FaEnvelope size={14} color="#73ae6a" className="mr-[5px]" />gonzalezdental@gmail.com</p>
        </div>
        <div>
          <h4 className={h}>Opening Hours</h4>
          <ul className="mt-[18px]">
            {HOURS.map(([d, t]) => <li key={d} className="flex h-[38px] items-center justify-between"><span>{d}</span><span>{t}</span></li>)}
          </ul>
        </div>
        <div>
          <h4 className={h}>Quick Link</h4>
          <ul className="mt-[18px]">
            {LINKS.map(([a, b]) => <li key={a} className="grid h-[38px] grid-cols-2 items-center tracking-[0.1px]"><a>{a}</a><a>{b}</a></li>)}
          </ul>
        </div>
      </div>
      <div className="ml-px box-content h-[93px] w-[1110px] border-y border-[#50657c]" />
      <p className="mt-[22px] flex h-5 items-center justify-center pr-px text-[12px] tracking-[-0.04px] whitespace-pre text-[#1f2b37]">
        Copyright ©2021 All rights reserved | This template is made with <Heart size={12} strokeWidth={2} /> by <span className="text-[#2e3640]">Colorlib --- Downloaded from Themeslab</span>
      </p>
      <ScrollTop className="bottom-[49px] h-10" />
    </footer>
  );
}

export default function App() {
  return (
    <div className="relative w-[1263px] overflow-hidden bg-white">
      <Browser />
      <Header />
      <div className={`flex h-[200px] items-center justify-center bg-[#2d445b] pt-[2px] text-[40px] font-semibold tracking-[0.5px] text-white ${HEAD}`}>CONTACT</div>
      <main className="ml-[77px] h-[1147px] w-[1110px]">
        <div className={`flex h-[131px] pt-[31px] text-[14px] leading-5 text-[#2b2f33] ${HEAD}`}>
          <FaHome size={13} className="mt-[3px] mr-1" />
          <span className="font-medium tracking-[0.85px]">Home</span>
          <ChevronRight size={13} className="mx-[4px] mt-1 text-[#6c757d]" />
          <span className="tracking-[0.5px] text-[#6c757d]">Contact</span>
        </div>
        <MapPanel />
        <Contact />
      </main>
      <ScrollTop className="top-[1160px] h-[39px]" />
      <Footer />
    </div>
  );
}
